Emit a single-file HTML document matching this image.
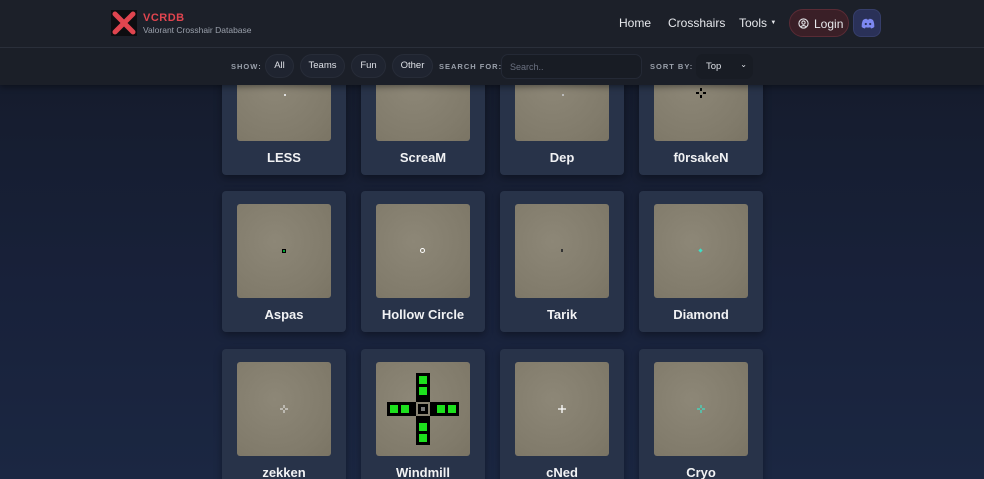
<!DOCTYPE html>
<html style="width:984px;height:479px;overflow:hidden"><head><style>
*{margin:0;padding:0;box-sizing:border-box}
body{width:984px;height:479px;overflow:hidden;font-family:"Liberation Sans",sans-serif;background:linear-gradient(180deg,#141a28 0%,#18213a 60%,#1b2742 100%);position:relative;color:#fff}
.hdr{position:absolute;top:0;left:0;width:984px;height:48px;background:#1c2029;border-bottom:1px solid #2a2f3a;z-index:5}
.logo{position:absolute;left:111px;top:10px;width:26px;height:26px;background:#0d0d10}
.brand{position:absolute;left:143px;top:12px;color:#e0454f;font-weight:bold;font-size:11px;letter-spacing:.5px}
.sub{position:absolute;left:143px;top:25px;color:#9aa0ab;font-size:8.5px}
.nav{position:absolute;top:16px;font-size:12px;color:#e6e8ec}
.login{position:absolute;left:789px;top:9px;width:60px;height:28px;border-radius:14px;background:#3a1f27;border:1px solid #5a2b35;font-size:12px;color:#e6e8ec;padding:7px 0 0 24px}
.disc{position:absolute;left:853px;top:9px;width:28px;height:28px;border-radius:8px;background:#2a3158;border:1px solid #363e6a}
.bar{position:absolute;top:48px;left:0;width:984px;height:37px;background:#1b1f28;z-index:4;box-shadow:0 2px 6px rgba(0,0,0,.4)}
.lbl{position:absolute;top:14px;font-size:7.5px;font-weight:bold;letter-spacing:1px;color:#9aa0ab}
.pill{position:absolute;top:6px;height:24px;border-radius:12px;background:#1f2430;border:1px solid #272c38;font-size:9.5px;color:#dde0e6;text-align:center;line-height:22px}
.inp{position:absolute;left:501px;top:6px;width:141px;height:25px;border-radius:7px;background:#181c24;border:1px solid #242935;font-size:9px;color:#6b7180;padding:7px 8px}
.sel{position:absolute;left:696px;top:6px;width:57px;height:25px;border-radius:7px;background:#181c24;font-size:9.5px;color:#dde0e6;padding:7px 10px}
.card{position:absolute;width:124px;height:141px;background:#283349;border-radius:4px;box-shadow:0 3px 8px rgba(0,0,0,.35);z-index:1}
.img{position:absolute;left:15px;top:13px;width:94px;height:94px;border-radius:3px;background:radial-gradient(circle at 40% 40%,#8d8777,#817b6b 70%,#7a7464)}
.name{position:absolute;left:0;width:124px;top:116px;text-align:center;font-weight:bold;font-size:13px;color:#f1f2f4}
.x{position:absolute;left:47px;top:47px}
</style></head><body>
<div class="hdr">
<div class="logo"><svg width="26" height="26" viewBox="0 0 26 26"><path d="M4 4L22 22M22 4L4 22" stroke="#e0454f" stroke-width="5" stroke-linecap="round"/></svg></div>
<div class="brand">VCRDB</div><div class="sub">Valorant Crosshair Database</div>
<div class="nav" style="left:619px">Home</div>
<div class="nav" style="left:668px">Crosshairs</div>
<div class="nav" style="left:739px">Tools <span style="font-size:6px;vertical-align:3px">▼</span></div>
<div class="login"><svg style="position:absolute;left:8px;top:8px" width="11" height="11" viewBox="0 0 12 12"><circle cx="6" cy="6" r="5" fill="none" stroke="#e6e8ec" stroke-width="1.2"/><circle cx="6" cy="5" r="1.8" fill="none" stroke="#e6e8ec" stroke-width="1.1"/><path d="M3 9.5Q6 7 9 9.5" fill="none" stroke="#e6e8ec" stroke-width="1.1"/></svg>Login</div>
<div class="disc"><svg style="position:absolute;left:7px;top:8px" width="14" height="11" viewBox="0 0 14 11"><path d="M2 2Q4 0.5 5.5 0.8L6 1.5H8L8.5 0.8Q10 0.5 12 2Q13.5 5 13.3 9Q11.8 10.3 10 10.5L9.3 9.3Q7 10 4.7 9.3L4 10.5Q2.2 10.3 0.7 9Q0.5 5 2 2Z" fill="#7d88f0"/><circle cx="4.8" cy="6" r="1.1" fill="#2a3158"/><circle cx="9.2" cy="6" r="1.1" fill="#2a3158"/></svg></div>
</div>
<div class="bar">
<div class="lbl" style="left:231px">SHOW:</div>
<div class="pill" style="left:265px;width:29px">All</div>
<div class="pill" style="left:300px;width:45px">Teams</div>
<div class="pill" style="left:351px;width:35px">Fun</div>
<div class="pill" style="left:392px;width:41px">Other</div>
<div class="lbl" style="left:439px">SEARCH FOR:</div>
<div class="inp">Search..</div>
<div class="lbl" style="left:650px">SORT BY:</div>
<div class="sel">Top<span style="position:absolute;right:6px;top:6px;font-size:8px">⌄</span></div>
</div>

<div class="card" style="left:222px;top:34px"><div class="img"><div class="x" style="width:2px;height:2px;background:#ddd"></div></div><div class="name">LESS</div></div>
<div class="card" style="left:361px;top:34px"><div class="img"></div><div class="name">ScreaM</div></div>
<div class="card" style="left:500px;top:34px"><div class="img"><div class="x" style="width:2px;height:2px;background:#bbb"></div></div><div class="name">Dep</div></div>
<div class="card" style="left:639px;top:34px"><div class="img"><svg class="x" style="left:42px;top:41px" width="10" height="10"><rect x="4" y="0" width="2" height="3"/><rect x="4" y="7" width="2" height="3"/><rect x="0" y="4" width="3" height="2"/><rect x="7" y="4" width="3" height="2"/></svg></div><div class="name">f0rsakeN</div></div>

<div class="card" style="left:222px;top:191px"><div class="img"><div class="x" style="left:45px;top:45px;width:4px;height:4px;background:#0a3;border:1px solid #000"></div></div><div class="name">Aspas</div></div>
<div class="card" style="left:361px;top:191px"><div class="img"><div class="x" style="left:44px;top:44px;width:5px;height:5px;border:1px solid #fff;border-radius:50%"></div></div><div class="name">Hollow Circle</div></div>
<div class="card" style="left:500px;top:191px"><div class="img"><div class="x" style="left:46px;top:45px;width:2px;height:3px;background:#333"></div></div><div class="name">Tarik</div></div>
<div class="card" style="left:639px;top:191px"><div class="img"><div class="x" style="left:45px;top:45px;width:3px;height:3px;background:#3de0c8;transform:rotate(45deg)"></div></div><div class="name">Diamond</div></div>

<div class="card" style="left:222px;top:349px"><div class="img"><svg class="x" style="left:43px;top:43px" width="8" height="8"><path d="M4 0V3M4 5V8M0 4H3M5 4H8" stroke="#eee" stroke-width="1"/></svg></div><div class="name">zekken</div></div>
<div class="card" style="left:361px;top:349px"><div class="img">
<svg style="position:absolute;left:10px;top:10px" width="74" height="74" viewBox="0 0 74 74">
<rect x="30" y="1" width="14" height="29" fill="#000"/><rect x="33" y="4" width="8" height="8" fill="#1de01d"/><rect x="33" y="15" width="8" height="8" fill="#1de01d"/>
<rect x="30" y="44" width="14" height="29" fill="#000"/><rect x="33" y="51" width="8" height="8" fill="#1de01d"/><rect x="33" y="62" width="8" height="8" fill="#1de01d"/>
<rect x="1" y="30" width="29" height="14" fill="#000"/><rect x="4" y="33" width="8" height="8" fill="#1de01d"/><rect x="15" y="33" width="8" height="8" fill="#1de01d"/>
<rect x="44" y="30" width="29" height="14" fill="#000"/><rect x="51" y="33" width="8" height="8" fill="#1de01d"/><rect x="62" y="33" width="8" height="8" fill="#1de01d"/>
<rect x="32" y="32" width="10" height="10" fill="#000"/><rect x="35" y="35" width="4" height="4" fill="#777"/></svg></div><div class="name">Windmill</div></div>
<div class="card" style="left:500px;top:349px"><div class="img"><svg class="x" style="left:43px;top:43px" width="8" height="8"><path d="M4 0V8M0 4H8" stroke="#fff" stroke-width="1.3"/></svg></div><div class="name">cNed</div></div>
<div class="card" style="left:639px;top:349px"><div class="img"><svg class="x" style="left:43px;top:43px" width="8" height="8"><path d="M4 0V3M4 5V8M0 4H3M5 4H8" stroke="#3de0c8" stroke-width="1.2"/></svg></div><div class="name">Cryo</div></div>
</body></html>
